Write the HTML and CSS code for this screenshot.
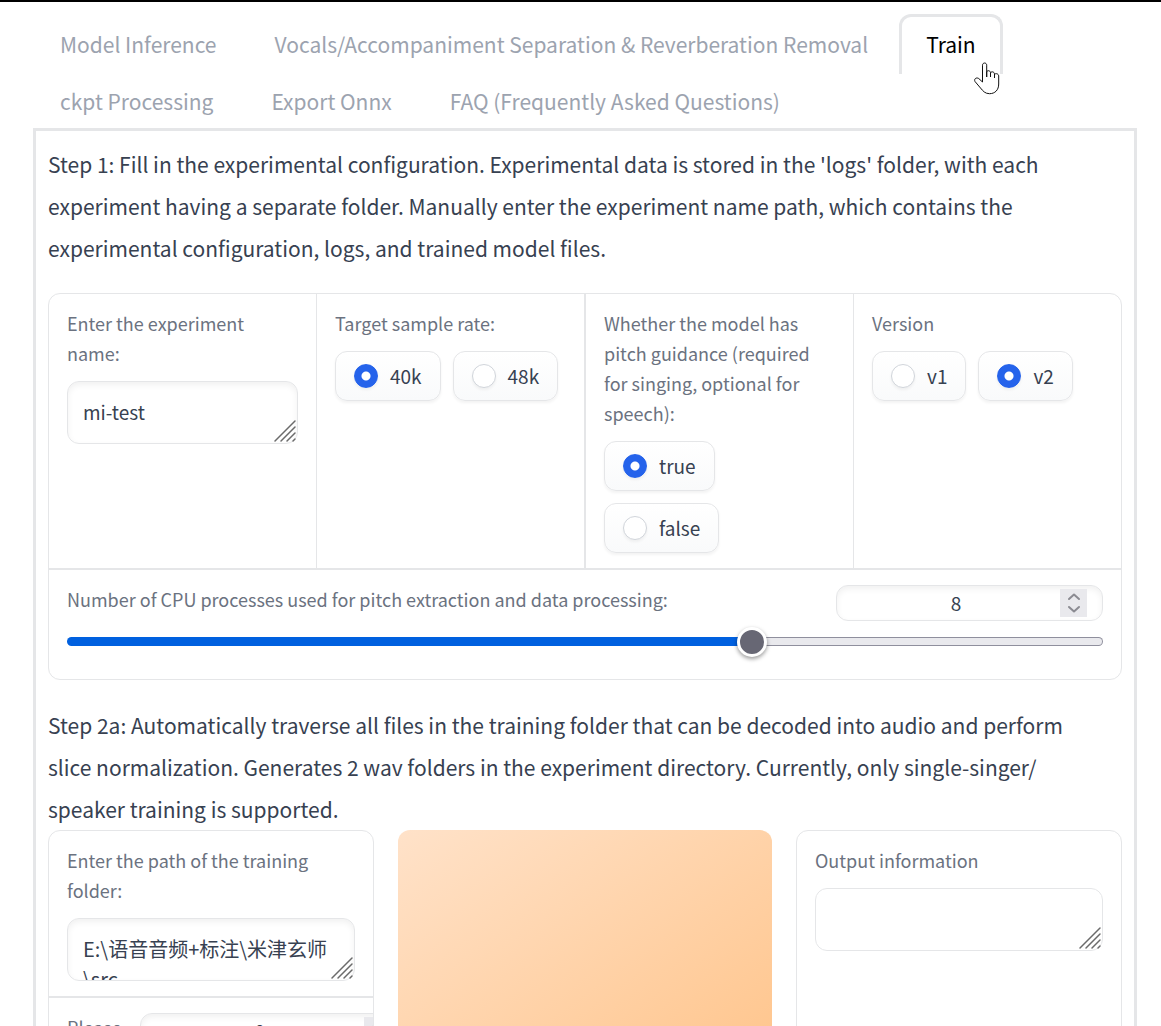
FILE: index.html
```html
<!DOCTYPE html>
<html lang="en">
<head>
  <meta charset="UTF-8">
  <meta name="viewport" content="width=device-width">
  <title>Train</title>
  <link rel="stylesheet" href="styles.css">
</head>
<body>

<svg class="defs" aria-hidden="true">
  <symbol id="grip" viewBox="0 0 24 24">
    <path d="M2 22L22 2M8 22L22 8M14 22L22 14M20 22L22 20" fill="none" stroke="#6b6b6b" stroke-width="1.5" stroke-linecap="round"/>
  </symbol>
  <symbol id="spin" viewBox="0 0 27 28">
    <path fill="#e9e9ed" d="M0 0h27v28H0z"/>
    <path d="M9 10l5-4.500 5 4.500M9 18l5 4.500 5-4.500" fill="none" stroke="#8b8b92" stroke-width="2" stroke-linecap="round" stroke-linejoin="round"/>
  </symbol>
</svg>

<nav class="tabs">
  <button type="button">Model Inference</button>
  <button type="button">Vocals/Accompaniment Separation &amp; Reverberation Removal</button>
  <button type="button" class="selected">Train
    <svg class="pointer" viewBox="0 0 26 33" aria-hidden="true">
      <path d="M8.500 20V3.200C8.500.3 12.700.3 12.700 3.200V15V10C13.200 8 16.200 8.400 16.500 10.500V15V11C17.200 9.200 20.300 9.500 20.500 12V16V12.500C21.500 11 24.500 11.500 24.700 14V22C24.700 28 21 31.700 15.500 31.700C11 31.700 9 29 6.500 26L1 19.500C-.3 17 2.200 15 4.700 16.500L8.500 20Z" fill="#fff" stroke="#111" stroke-linejoin="round"/>
    </svg>
  </button>
  <button type="button">ckpt Processing</button>
  <button type="button">Export Onnx</button>
  <button type="button">FAQ (Frequently Asked Questions)</button>
</nav>

<main class="panel">
  <p class="step">Step 1: Fill in the experimental configuration. Experimental data is stored in the 'logs' folder, with each experiment having a separate folder. Manually enter the experiment name path, which contains the experimental configuration, logs, and trained model files.</p>

  <div class="group setup">
    <div class="row">
      <div class="block">
        <label class="title" for="name">Enter the experiment name:</label>
        <div class="area">
          <textarea id="name" rows="1">mi-test</textarea>
          <svg class="grip"><use href="#grip"/></svg>
        </div>
      </div>
      <fieldset class="block">
        <legend class="title">Target sample rate:</legend>
        <div class="options">
          <label><input type="radio" name="rate" checked>40k</label>
          <label><input type="radio" name="rate">48k</label>
        </div>
      </fieldset>
      <fieldset class="block">
        <legend class="title">Whether the model has pitch guidance (required for singing, optional for speech):</legend>
        <div class="options stacked">
          <label><input type="radio" name="pitch" checked>true</label>
          <label><input type="radio" name="pitch">false</label>
        </div>
      </fieldset>
      <fieldset class="block">
        <legend class="title">Version</legend>
        <div class="options">
          <label><input type="radio" name="version">v1</label>
          <label><input type="radio" name="version" checked>v2</label>
        </div>
      </fieldset>
    </div>
    <div class="block slider">
      <div class="head">
        <label class="title" for="cpu">Number of CPU processes used for pitch extraction and data processing:</label>
        <div class="number">
          <input type="number" id="cpu" value="8" min="0" max="12">
          <svg class="spin"><use href="#spin"/></svg>
        </div>
      </div>
      <input type="range" aria-label="CPU processes" value="8" min="0" max="12">
    </div>
  </div>

  <p class="step">Step 2a: Automatically traverse all files in the training folder that can be decoded into audio and perform<br>
  slice normalization. Generates 2 wav folders in the experiment directory. Currently, only single-singer/<br>
  speaker training is supported.</p>

  <div class="process">
    <div class="group">
      <div class="block">
        <label class="title" for="folder">Enter the path of the training folder:</label>
        <div class="area">
          <textarea id="folder" class="path" rows="1">E:\语音音频+标注\米津玄师\src</textarea>
          <svg class="grip"><use href="#grip"/></svg>
        </div>
      </div>
      <div class="block slider">
        <div class="head">
          <label class="title" for="speaker">Please</label>
          <div class="number">
            <input type="number" id="speaker" value="0">
            <svg class="spin"><use href="#spin"/></svg>
          </div>
        </div>
      </div>
    </div>
    <button type="button" class="primary" aria-label="Process"></button>
    <div class="group">
      <div class="block">
        <label class="title" for="info">Output information</label>
        <div class="area">
          <textarea id="info" class="output" rows="1" readonly></textarea>
          <svg class="grip"><use href="#grip"/></svg>
        </div>
      </div>
    </div>
  </div>
</main>

</body>
</html>
```
FILE: styles.css
```css
* {
    box-sizing: border-box;
}
body {
    height: 100vh;
    margin: 0;
    padding: 12px 24px 0 33px;
    border-top: 2px solid #000;
    overflow: hidden;
    background: #fff;
    color: #374151;
    font: 19px/30px "Noto Sans CJK SC", sans-serif;
}
button, input, textarea {
    font: inherit;
    color: inherit;
}
.defs {
    display: none;
}

/* tabs */
.tabs {
    display: flex;
    flex-wrap: wrap;
    column-gap: 4px;
}
.tabs button {
    position: relative;
    height: 60px;
    margin-bottom: -3px;
    padding: 0 24px 4px;
    border: 3px solid transparent;
    border-bottom: 0;
    border-radius: 12px 12px 0 0;
    background: none;
    color: #9ca3af;
    font-size: 21px;
    white-space: nowrap;
}
.tabs .selected {
    border-color: #e5e6e8;
    background: #fff;
    color: #000;
}
.pointer {
    position: absolute;
    right: 0;
    bottom: -21px;
    width: 26px;
    height: 33px;
}

.panel {
    padding: 12px;
    border: 3px solid #e5e6e8;
}
.step {
    margin: 0;
    font-size: 21px;
    line-height: 42px;
}

/* blocks */
.group {
    border: 1px solid #e5e6e8;
    border-radius: 12px;
    overflow: hidden;
}
.setup {
    margin: 24px 0;
}
.row {
    display: grid;
    grid-template-columns: repeat(4, 1fr);
}
.block {
    min-width: 0;
    margin: 0;
    padding: 14px 18px 15px;
    border: 0 solid #e5e6e8;
}
.row .block:nth-child(-n+2) {
    border-right-width: 1px;
}
.row .block:nth-child(n+3) {
    border-left-width: 1px;
}
.title {
    display: block;
    float: left;
    width: 100%;
    margin-bottom: 13px;
    padding: 0;
    color: #6b7280;
    font-size: 18px;
}
.area {
    position: relative;
    clear: both;
}
textarea {
    display: block;
    width: 100%;
    height: 63px;
    padding: 15px;
    border: 1px solid #e5e6e8;
    border-radius: 12px;
    box-shadow: inset 0 3px 6px rgba(0, 0, 0, 0.06);
    background: #fff;
    resize: none;
    overflow: hidden;
}
.path {
    font-size: 20px;
}
.output {
    box-shadow: none;
}
.grip {
    position: absolute;
    right: 1px;
    bottom: 1px;
    width: 24px;
    height: 24px;
}

/* radios */
.options {
    display: flex;
    flex-wrap: wrap;
    gap: 12px;
    clear: both;
}
.stacked {
    flex-direction: column;
    align-items: flex-start;
}
.options label {
    display: flex;
    align-items: center;
    gap: 12px;
    height: 50px;
    padding: 0 18px;
    border: 1px solid #e5e6e8;
    border-radius: 12px;
    box-shadow: 0 2px 3px rgba(0, 0, 0, 0.05);
    background: linear-gradient(#fff, #f9fafb);
}
input[type=radio] {
    appearance: none;
    width: 24px;
    height: 24px;
    margin: 0;
    border: 1px solid #d1d5db;
    border-radius: 50%;
    box-shadow: 0 2px 3px rgba(0, 0, 0, 0.05);
    background: #fff;
}
input[type=radio]:checked {
    border-color: #2563eb;
    background: radial-gradient(circle, #fff 4px, #2563eb 5px);
}

/* slider */
.slider {
    padding-top: 15px;
    border-top-width: 2px;
}
.head {
    display: flex;
    justify-content: space-between;
    gap: 18px;
}
.head .title {
    width: auto;
    margin: -1px 0 0;
}
.number {
    position: relative;
    flex: none;
    width: 267px;
}
input[type=number] {
    display: block;
    appearance: textfield;
    width: 100%;
    height: 36px;
    padding: 0 42px 2px 15px;
    border: 1px solid #e5e6e8;
    border-radius: 12px;
    box-shadow: inset 0 3px 6px rgba(0, 0, 0, 0.06);
    text-align: center;
}
input[type=number]::-webkit-inner-spin-button {
    display: none;
}
.spin {
    position: absolute;
    top: 4px;
    right: 16px;
    width: 27px;
    height: 28px;
}
input[type=range] {
    display: block;
    appearance: none;
    width: 100%;
    height: 30px;
    margin: 5px 0 8px;
    background: none;
}
input[type=range]::-webkit-slider-runnable-track {
    height: 9px;
    border: 1px solid transparent;
    border-radius: 5px;
    background:
        linear-gradient(90deg, #0060df 66%, transparent 66%) border-box,
        linear-gradient(#e9e9ed, #e9e9ed) padding-box,
        linear-gradient(#8f8f9d, #8f8f9d) border-box;
}
input[type=range]::-webkit-slider-thumb {
    appearance: none;
    width: 30px;
    height: 30px;
    margin-top: -11px;
    border: 3px solid #fff;
    border-radius: 50%;
    box-shadow: 0 2px 4px rgba(0, 0, 0, 0.4);
    background: #676774;
}

.process {
    display: grid;
    grid-template-columns: 326fr 374fr 326fr;
    gap: 24px;
}
.primary {
    min-height: 270px;
    border: 0;
    border-radius: 12px;
    background: linear-gradient(to bottom right, #ffe2c9, #ffc388);
}
```
